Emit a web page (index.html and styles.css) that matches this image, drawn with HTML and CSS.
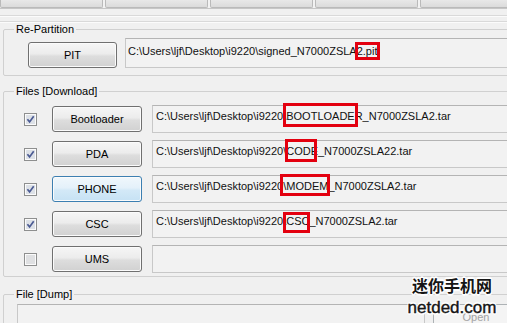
FILE: index.html
```html
<!DOCTYPE html>
<html>
<head>
<meta charset="utf-8">
<link rel="stylesheet" href="styles.css">
</head>
<body>
<div class="page">
  <div class="tabs">
    <div class="tab"></div><div class="tab"></div><div class="tab"></div><div class="tab"></div><div class="tab"></div>
  </div>
  <div class="rule r1"></div>
  <div class="rule r2"></div>

  <fieldset class="group g-part">
    <legend>Re-Partition</legend>
    <div class="pit-row">
      <button class="btn pit">PIT</button>
      <div class="field pit-field">C:\Users\ljf\Desktop\i9220\signed_N7000ZSLA2.pit</div>
    </div>
  </fieldset>

  <fieldset class="group g-files">
    <legend>Files [Download]</legend>
    <div class="dl-rows">
      <div class="dl">
        <svg class="cb" viewBox="0 0 13 13"><rect x="0.5" y="0.5" width="12" height="12" fill="#fbfbfb" stroke="#8e8f8f"/><rect x="2" y="2" width="9" height="9" fill="#dde1e7"/><path d="M3.4 6.3 L5.6 8.9 L9.7 3.3" fill="none" stroke="#4b5b93" stroke-width="1.7"/></svg>
        <button class="btn">Bootloader</button>
        <div class="field">C:\Users\ljf\Desktop\i9220\BOOTLOADER_N7000ZSLA2.tar</div>
      </div>
      <div class="dl">
        <svg class="cb" viewBox="0 0 13 13"><rect x="0.5" y="0.5" width="12" height="12" fill="#fbfbfb" stroke="#8e8f8f"/><rect x="2" y="2" width="9" height="9" fill="#dde1e7"/><path d="M3.4 6.3 L5.6 8.9 L9.7 3.3" fill="none" stroke="#4b5b93" stroke-width="1.7"/></svg>
        <button class="btn">PDA</button>
        <div class="field">C:\Users\ljf\Desktop\i9220\CODE_N7000ZSLA22.tar</div>
      </div>
      <div class="dl">
        <svg class="cb" viewBox="0 0 13 13"><rect x="0.5" y="0.5" width="12" height="12" fill="#fbfbfb" stroke="#8e8f8f"/><rect x="2" y="2" width="9" height="9" fill="#dde1e7"/><path d="M3.4 6.3 L5.6 8.9 L9.7 3.3" fill="none" stroke="#4b5b93" stroke-width="1.7"/></svg>
        <button class="btn hot">PHONE</button>
        <div class="field">C:\Users\ljf\Desktop\i9220\MODEM_N7000ZSLA2.tar</div>
      </div>
      <div class="dl">
        <svg class="cb" viewBox="0 0 13 13"><rect x="0.5" y="0.5" width="12" height="12" fill="#fbfbfb" stroke="#8e8f8f"/><rect x="2" y="2" width="9" height="9" fill="#dde1e7"/><path d="M3.4 6.3 L5.6 8.9 L9.7 3.3" fill="none" stroke="#4b5b93" stroke-width="1.7"/></svg>
        <button class="btn">CSC</button>
        <div class="field">C:\Users\ljf\Desktop\i9220\CSC_N7000ZSLA2.tar</div>
      </div>
      <div class="dl">
        <svg class="cb" viewBox="0 0 13 13"><rect x="0.5" y="0.5" width="12" height="12" fill="#fbfbfb" stroke="#8e8f8f"/><rect x="2" y="2" width="9" height="9" fill="#dfe0e2"/></svg>
        <button class="btn">UMS</button>
        <div class="field"></div>
      </div>
    </div>
  </fieldset>

  <fieldset class="group g-dump">
    <legend>File [Dump]</legend>
    <div class="dump-row">
      <div class="field dump-field"></div>
      <button class="btn open" disabled>Open</button>
    </div>
  </fieldset>

  <div class="mark m-pit"></div>
  <div class="mark m-boot"></div>
  <div class="mark m-code"></div>
  <div class="mark m-modem"></div>
  <div class="mark m-csc"></div>

  <div class="wm">
    <div class="wm-cn">迷你手机网</div>
    <div class="wm-en">netded.com</div>
  </div>
</div>
</body>
</html>
```
FILE: styles.css
```css
html, body {
  margin: 0;
  padding: 0;
}
body {
  background: #f0f0f0;
  overflow: hidden;
  font-family: "Liberation Sans", Arial, sans-serif;
  font-size: 11px;
  color: #000;
}
.page {
  position: relative;
  width: 560px;
  height: 323px;
  overflow: hidden;
}
.tabs {
  display: flex;
  gap: 2px;
  height: 8px;
  border-bottom: 1px solid #c6c6c6;
  background: #f2f2f2;
}
.tab {
  flex: none;
  width: 101px;
  background: linear-gradient(#e8e8e8, #dbdbdb);
  border: 1px solid #bababa;
  border-top: 0;
  border-radius: 0 0 2px 2px;
}
.rule {
  height: 0;
  border-top: 1px solid #d9d9d9;
  border-bottom: 1px solid #fbfbfb;
}
.r1 { margin-top: 6px; }
.r2 { margin-top: 4px; }

.group {
  margin: 0 0 0 3px;
  border: 1px solid #d0d0d0;
  border-radius: 2px;
  padding: 0 0 0 10px;
  min-width: 0;
}
.group legend {
  padding: 0 2px;
  font-size: 11px;
  line-height: 13px;
  color: #000;
}
.g-part { padding-top: 2px; padding-bottom: 7px; }
.g-files { margin-top: 9px; padding-top: 7px; padding-bottom: 3px; }
.g-dump { margin-top: 11px; padding-top: 3px; padding-bottom: 10px; }

.btn {
  box-sizing: border-box;
  font-family: "Liberation Sans", Arial, sans-serif;
  font-size: 11px;
  color: #000;
  border: 1px solid #707070;
  border-radius: 3px;
  background: linear-gradient(#f6f6f6, #ececec 45%, #dddddd 55%, #d1d1d1);
  box-shadow: inset 0 0 0 1px #fbfbfb;
  padding: 0;
  flex: none;
}
.btn.hot {
  border-color: #3c7fb1;
  background: linear-gradient(#f0f7fc, #e4f1fa 45%, #d3e9f7 55%, #c6e2f4);
}
.field {
  flex: 1;
  box-sizing: border-box;
  height: 28px;
  border: 1px solid #c8c8c8;
  border-top-color: #b4b4b4;
  background: #f2f2f2;
  padding: 4px 0 0 3px;
  white-space: nowrap;
  line-height: 13px;
  color: #111;
}

.pit-row {
  display: flex;
  align-items: flex-end;
  gap: 8px;
  margin-left: 14px;
}
.pit {
  width: 89px;
  height: 26px;
}
.pit-field {
  height: 30px;
  padding: 6px 0 0 2px;
}

.dl-rows {
  display: flex;
  flex-direction: column;
  gap: 7px;
}
.dl {
  display: flex;
  align-items: center;
  height: 28px;
}
.cb {
  flex: none;
  width: 13px;
  height: 13px;
  margin-left: 10px;
  margin-right: 15px;
}
.dl .btn {
  width: 90px;
  height: 26px;
  margin-right: 10px;
}

.dump-row {
  display: flex;
  align-items: flex-start;
  margin-left: 3px;
}
.dump-field {
  flex: none;
  width: 408px;
  height: 30px;
}
.open {
  margin-left: 8px;
  width: 86px;
  height: 26px;
  color: #a3a3a3;
  border-color: #adb2b5;
  background: #f4f4f4;
  box-shadow: none;
}

.mark {
  position: absolute;
  box-sizing: border-box;
  border: 3px solid #e3000f;
}
.m-pit { left: 355px; top: 42px; width: 25px; height: 18px; }
.m-boot { left: 283px; top: 103px; width: 75px; height: 24px; }
.m-code { left: 285px; top: 139px; width: 32px; height: 23px; }
.m-modem { left: 280px; top: 174px; width: 50px; height: 22px; }
.m-csc { left: 283px; top: 212px; width: 27px; height: 21px; }

.wm {
  position: absolute;
  left: 406px;
  top: 277px;
  width: 92px;
  text-align: center;
  color: #151515;
  text-shadow: 0 0 1px #fff, 1px 1px 0 #fff, -1px -1px 0 #fff, 1px -1px 0 #fff, -1px 1px 0 #fff, 0 2px 1px #fff, 0 -2px 1px #fff;
}
.wm-cn {
  font-family: "Noto Sans CJK SC", sans-serif;
  font-weight: bold;
  font-size: 16px;
  line-height: 16px;
}
.wm-en {
  margin-top: 6px;
  font-family: "Liberation Sans", Arial, sans-serif;
  font-size: 17px;
  line-height: 17px;
  -webkit-text-stroke: 0.4px #151515;
}
```
